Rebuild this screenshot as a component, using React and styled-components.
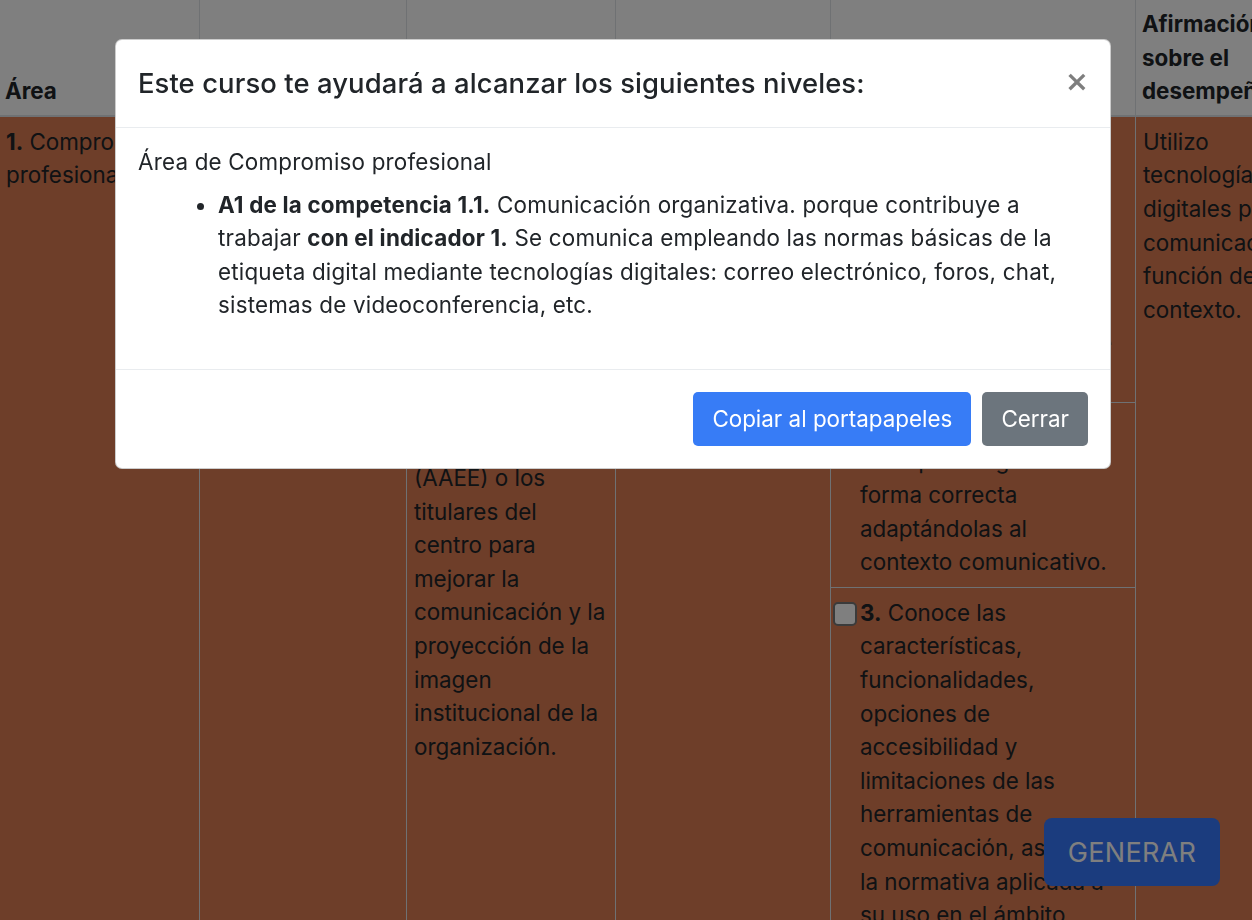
import React from 'react';
import styled, { createGlobalStyle } from 'styled-components';

const GlobalStyle = createGlobalStyle`
  html, body {
    margin: 0;
    overflow: hidden;
  }
  body {
    font-family: Inter, "Noto Sans", "Liberation Sans", sans-serif;
    font-size: 22.4px;
    line-height: 1.5;
    color: #212529;
    background: #fff;
  }
`;

const indicators = [
  {
    n: '1.',
    text: 'Se comunica empleando las normas básicas de la etiqueta digital mediante tecnologías digitales: correo electrónico, foros, chat, sistemas de videoconferencia, etc.',
  },
  {
    n: '2.',
    text: 'Utiliza las normas de la etiqueta digital de forma correcta adaptándolas al contexto comunicativo.',
  },
  {
    n: '3.',
    text: 'Conoce las características, funcionalidades, opciones de accesibilidad y limitaciones de las herramientas de comunicación, así como la normativa aplicada a su uso en el ámbito educativo.',
  },
];

export default function App() {
  return (
    <>
      <GlobalStyle />
      <Table>
        <colgroup>
          <col style={{ width: 201 }} />
          <col style={{ width: 207 }} />
          <col style={{ width: 209 }} />
          <col style={{ width: 215 }} />
          <col style={{ width: 305 }} />
          <col style={{ width: 200 }} />
        </colgroup>
        <thead>
          <tr>
            <HeadCell>Área</HeadCell>
            <HeadCell>Competencia</HeadCell>
            <HeadCell>Descripción</HeadCell>
            <HeadCell>Nivel</HeadCell>
            <HeadCell>Indicadores</HeadCell>
            <HeadCell>Afirmación sobre el desempeño</HeadCell>
          </tr>
        </thead>
        <tbody>
          {indicators.map((ind, i) => (
            <tr key={ind.n}>
              {i === 0 && (
                <>
                  <Cell rowSpan={3}><b>1.</b> Compromiso profesional</Cell>
                  <Cell rowSpan={3}><b>1.1.</b> Comunicación organizativa</Cell>
                  <Cell rowSpan={3}>
                    Utiliza las tecnologías digitales para comunicarse con el alumnado, las familias, otros docentes, otros centros, las Administraciones educativas (AAEE) o los titulares del centro para mejorar la comunicación y la proyección de la imagen institucional de la organización.
                  </Cell>
                  <Cell rowSpan={3}>A1</Cell>
                </>
              )}
              <IndicatorCell>
                <Indicator>
                  <Check />
                  <span><b>{ind.n}</b> {ind.text}</span>
                </Indicator>
              </IndicatorCell>
              {i === 0 && (
                <Cell rowSpan={3}>Utilizo tecnologías digitales para comunicación en función del contexto.</Cell>
              )}
            </tr>
          ))}
        </tbody>
      </Table>

      <GenerateButton>Generar</GenerateButton>

      <Backdrop />

      <ModalLayer>
        <Dialog>
          <ModalHeader>
            <ModalTitle>Este curso te ayudará a alcanzar los siguientes niveles:</ModalTitle>
            <CloseButton aria-label="Cerrar">×</CloseButton>
          </ModalHeader>
          <ModalBody>
            <AreaTitle>Área de Compromiso profesional</AreaTitle>
            <LevelList>
              <li>
                <b>A1 de la competencia 1.1.</b> Comunicación organizativa. porque contribuye a trabajar{' '}
                <b>con el indicador 1.</b> Se comunica empleando las normas básicas de la etiqueta digital mediante tecnologías digitales: correo electrónico, foros, chat, sistemas de videoconferencia, etc.
              </li>
            </LevelList>
          </ModalBody>
          <ModalFooter>
            <Button $variant="primary">Copiar al portapapeles</Button>
            <Button $variant="secondary">Cerrar</Button>
          </ModalFooter>
        </Dialog>
      </ModalLayer>
    </>
  );
}

const Table = styled.table`
  table-layout: fixed;
  border-collapse: collapse;
  width: 1337px;
  margin-left: -2px;
`;

const HeadCell = styled.th`
  vertical-align: bottom;
  text-align: left;
  font-weight: 700;
  padding: 7px 7px 7px 6px;
  border: 1px solid #dee2e6;
  border-top: 0;
  border-bottom: 2px solid #dee2e6;
  background: #fff;
  color: transparent;

  &:first-child,
  &:last-child {
    color: #212529;
  }
`;

const Cell = styled.td`
  vertical-align: top;
  padding: 8px 7px 7px 7px;
  border: 1px solid #dee2e6;
  background: #dc7c52;
  color: #212529;
  overflow: hidden;
`;

const IndicatorCell = styled(Cell)`
  padding: 8px 17px 8px 2px;
`;

const Indicator = styled.label`
  display: flex;
  align-items: flex-start;
  gap: 3px;
`;

const Check = styled.span`
  flex: none;
  width: 24px;
  height: 24px;
  margin-top: 6px;
  box-sizing: border-box;
  border: 2px solid #777;
  border-radius: 5px;
  background: #fff;
`;

const GenerateButton = styled.button`
  position: fixed;
  right: 32px;
  bottom: 34px;
  width: 176px;
  height: 68px;
  border: 0;
  border-radius: 8px;
  background: #3678fc;
  color: #fff;
  font-family: Inter, "Noto Sans", sans-serif;
  font-size: 27px;
  text-transform: uppercase;
  letter-spacing: 0.3px;
`;

const Backdrop = styled.div`
  position: fixed;
  inset: 0;
  background: rgba(0, 0, 0, 0.5);
`;

const ModalLayer = styled.div`
  position: fixed;
  inset: 0;
  padding: 39px 0 0 115px;
`;

const Dialog = styled.div`
  width: 996px;
  background: #fff;
  border: 1px solid rgba(0, 0, 0, 0.2);
  border-radius: 7px;
  box-sizing: border-box;
`;

const ModalHeader = styled.div`
  display: flex;
  align-items: center;
  justify-content: space-between;
  height: 87px;
  padding: 0 22px;
  border-bottom: 1px solid #e9ecef;
`;

const ModalTitle = styled.h5`
  margin: 0;
  font-size: 27.4px;
  font-weight: 500;
  line-height: 1.2;
  letter-spacing: 0.1px;
  color: #212529;
`;

const CloseButton = styled.button`
  border: 0;
  background: none;
  padding: 0;
  margin: -4px -1px 0 0;
  font-family: "DejaVu Sans", sans-serif;
  font-size: 29px;
  font-weight: 700;
  line-height: 1;
  color: #000;
  opacity: 0.5;
`;

const ModalBody = styled.div`
  padding: 17px 22px 25px 22px;
  border-bottom: 1px solid #e9ecef;
  letter-spacing: 0.2px;
`;

const AreaTitle = styled.div`
  line-height: 33.6px;
`;

const LevelList = styled.ul`
  margin: 9px 0 0;
  padding: 0 0 22px 80px;
  line-height: 33.6px;
`;

const ModalFooter = styled.div`
  display: flex;
  justify-content: flex-end;
  gap: 11px;
  padding: 22px 22px 22px;
`;

const Button = styled.button`
  height: 54px;
  padding: 0 18px;
  border: 1px solid transparent;
  border-radius: 5px;
  font-family: Inter, "Noto Sans", sans-serif;
  font-size: 22.4px;
  line-height: 1.5;
  color: #fff;
  background: ${p => (p.$variant === 'primary' ? '#377cf6' : '#6c757d')};
`;
